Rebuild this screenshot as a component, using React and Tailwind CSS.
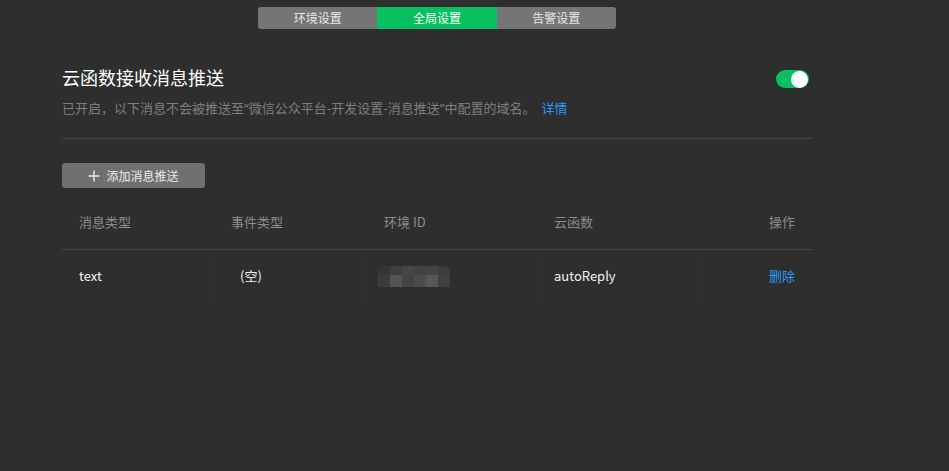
const FONT = { fontFamily: '"Microsoft YaHei", "Noto Sans CJK SC", "Noto Sans", sans-serif' }
const LATIN = { fontFamily: '"Noto Sans", sans-serif' }

const tabs = ["环境设置", "全局设置", "告警设置"]

const cols = [
  { label: "消息类型", w: "w-[152px]" },
  { label: "事件类型", w: "w-[153px]" },
  { label: "环境 ID", w: "w-[170px]" },
  { label: "云函数", w: "w-[166px]" },
  { label: "操作", w: "w-[109px]", right: true },
]

const mosaicTop = ["#353535", "#3f3f3f", "#464646", "#424242", "#444444", "#3d3d3d"]
const mosaicBottom = ["#3b3b3b", "#545454", "#444444", "#4c4c4c", "#575757", "#404040"]

function Mosaic() {
  return (
    <div className="mt-[2px] flex flex-col overflow-hidden rounded-t-[6px]">
      <div className="flex">
        {mosaicTop.map((c, i) => (
          <div key={i} className="h-[9px] w-[12px]" style={{ background: c }} />
        ))}
      </div>
      <div className="flex">
        {mosaicBottom.map((c, i) => (
          <div key={i} className="h-[12px] w-[12px]" style={{ background: c }} />
        ))}
      </div>
    </div>
  )
}

export default function App() {
  return (
    <div className="h-[471px] w-full bg-[#2e2e2e] text-white" style={FONT}>
      <div className="ml-[62px] w-[750px] pt-[7px]">
        <div className="flex justify-center">
          <div className="flex h-[22px] w-[358px] overflow-hidden rounded-[3px] bg-[#757575] text-[12px] text-[#e8e8e8]">
            {tabs.map((t, i) => (
              <div
                key={t}
                className={`flex flex-1 items-center justify-center ${i === 1 ? "bg-[#07c160] text-white" : ""}`}
              >
                {t}
              </div>
            ))}
          </div>
        </div>

        <div className="mt-[36px] flex items-start justify-between">
          <h1 className="text-[18px] leading-[24px] text-white">云函数接收消息推送</h1>
          <div className="mr-[3px] mt-[5px] flex h-[18px] w-[33px] items-center justify-end rounded-full bg-[#07c160] pr-[1px]">
            <div className="h-[17px] w-[17px] rounded-full bg-white" />
          </div>
        </div>
        <p className="mt-[10px] text-[13px] leading-[18px] text-[#7e7e7e]">
          已开启，以下消息不会被推送至<span style={LATIN}>“</span>微信公众平台-开发设置-消息推送<span style={LATIN}>”</span>中配置的域名。
          <span className="ml-[6px] text-[#2b9af3]">详情</span>
        </p>

        <div className="mt-[21px] h-px bg-[#444444]" />

        <button className="mt-[24px] flex h-[25px] w-[143px] items-center justify-center gap-[6px] rounded-[3px] bg-[#707070] text-[12px] text-[#eaeaea]">
          <svg width="12" height="12" viewBox="0 0 12 12" fill="none" stroke="#eaeaea" strokeWidth="1.4">
            <path d="M6 0.5v11M0.5 6h11" />
          </svg>
          添加消息推送
        </button>

        <div className="mt-[11px]">
          <div className="flex h-[51px] border-b border-[#444444] pb-[5px] text-[13px] text-[#8c8c8c]">
            {cols.map((c) => (
              <div
                key={c.label}
                className={`${c.w} flex items-center px-[17px] ${c.right ? "justify-end" : ""}`}
              >
                {c.label}
              </div>
            ))}
          </div>
          <div className="flex h-[55px] pb-[4px] text-[13px] text-[#f2f2f2]">
            <div className="flex w-[152px] items-center border-r border-[#313131] px-[17px]">text</div>
            <div className="flex w-[153px] items-center border-r border-[#313131] px-[17px] pl-[26px]">(空)</div>
            <div className="flex w-[170px] items-center border-r border-[#313131] px-[11px]">
              <Mosaic />
            </div>
            <div className="flex w-[166px] items-center border-r border-[#313131] px-[17px]">autoReply</div>
            <div className="flex w-[109px] items-center justify-end px-[17px] text-[#2b9af3]">删除</div>
          </div>
        </div>
      </div>
    </div>
  )
}
